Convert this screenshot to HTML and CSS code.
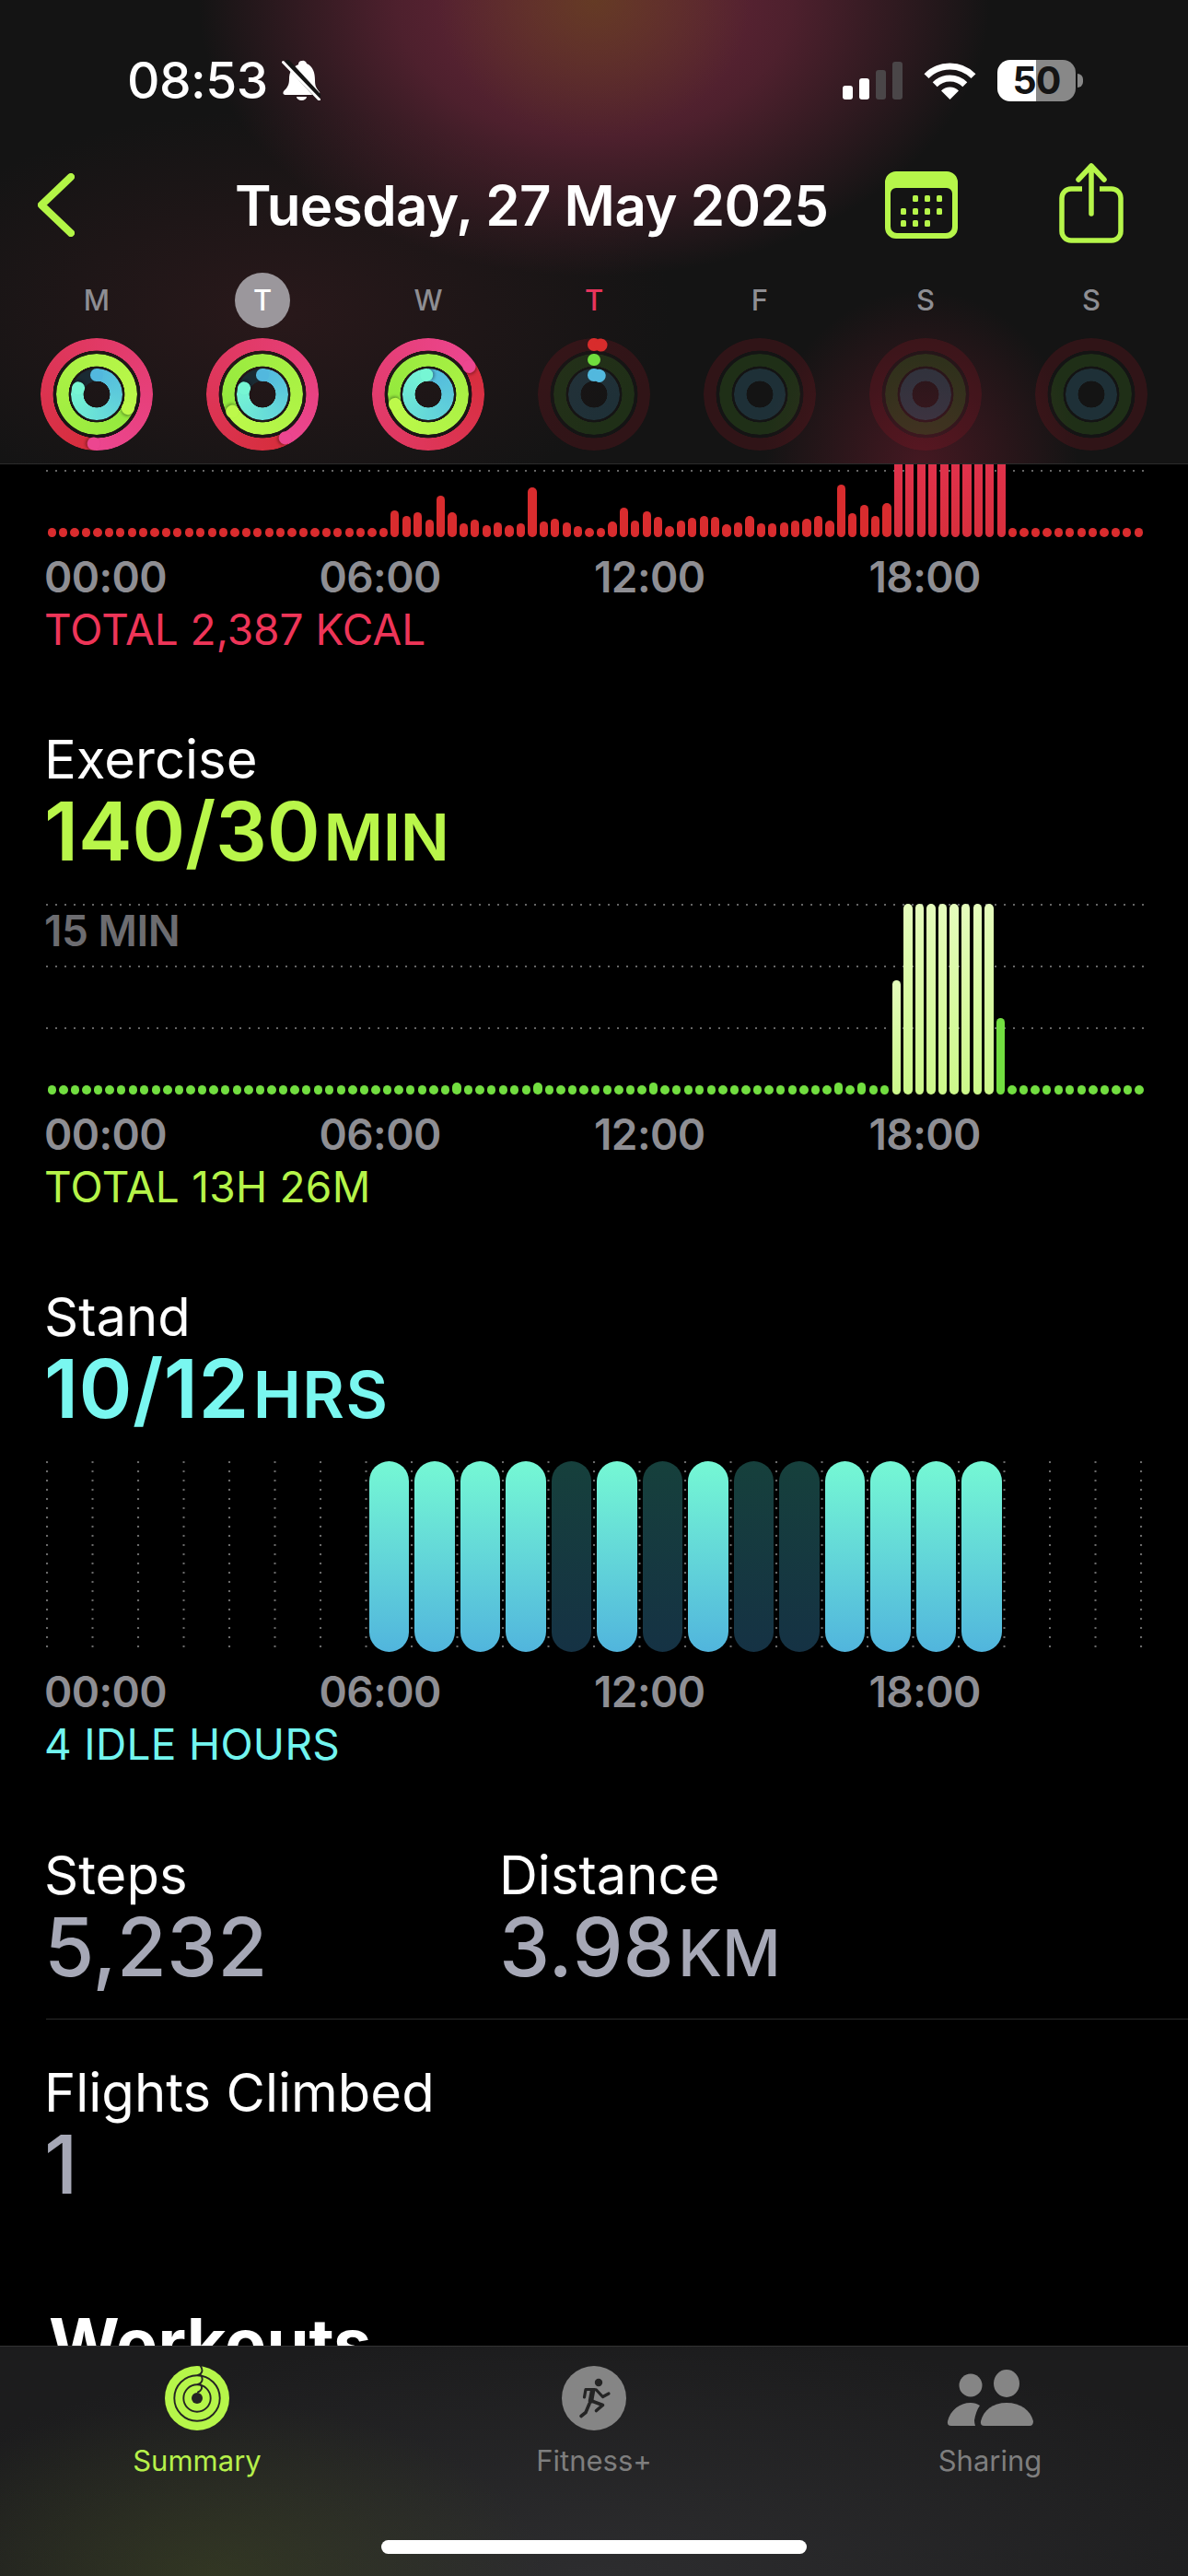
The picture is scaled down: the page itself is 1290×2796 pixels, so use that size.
FILE: index.html
```html
<!DOCTYPE html>
<html lang="en">
<head>
<meta charset="utf-8">
<title>Tuesday, 27 May 2025</title>
<link rel="stylesheet" href="styles.css">
</head>
<body>
<div class="app">
  <header class="top">
    <div class="status">
      <div class="status-left">
        <span class="clock">08:53</span>
        <svg class="bell" viewBox="0 0 42 44" width="42" height="44">
          <path fill="#fff" d="M22 1a4 4 0 0 1 5 3C34 7 36 14 36 22C36 28 37 30 41 35Q42 38 38 38L5 38Q0 38 2 34C6 30 8 27 8 21C8 13 11 8 18 5a4 4 0 0 1 4-4Z"/>
          <path fill="#fff" d="M16 40h11a5.500 4 0 0 1-11 0Z"/>
          <path stroke="#141414" stroke-width="7" d="M4 1L41 41"/>
          <path stroke="#fff" stroke-width="3" stroke-linecap="round" d="M1.500 2.500L40.500 43"/>
        </svg>
      </div>
      <div class="status-right">
        <div class="signal"><i class="s1"></i><i class="s2"></i><i class="s3"></i><i class="s4"></i></div>
        <svg class="wifi" viewBox="0 0 57 42" width="57" height="42">
          <path fill="none" stroke="#fff" stroke-width="7" d="M3 16.600A36 36 0 0 1 54 16.600"/>
          <path fill="none" stroke="#fff" stroke-width="7" d="M12.200 25.700A23 23 0 0 1 44.800 25.700"/>
          <path fill="#fff" d="M28.500 42L19 32.500A13.500 13.500 0 0 1 38 32.500Z"/>
        </svg>
        <div class="battery">50</div>
      </div>
    </div>
    <nav class="nav">
      <svg class="chevron" viewBox="0 0 40 69" width="40" height="69">
        <path fill="none" stroke="#b3f546" stroke-width="8" stroke-linecap="round" stroke-linejoin="round" d="M36 4L4 34.500L36 65"/>
      </svg>
      <h1 class="title">Tuesday, 27 May 2025</h1>
      <svg class="calendar" viewBox="0 0 79 73" width="79" height="73">
        <path fill="#b6f64a" fill-rule="evenodd" d="M12 0H67A12 12 0 0 1 79 12V61A12 12 0 0 1 67 73H12A12 12 0 0 1 0 61V12A12 12 0 0 1 12 0ZM12 18A6 6 0 0 0 6 24V60A7 7 0 0 0 13 67H66A7 7 0 0 0 73 60V24A6 6 0 0 0 67 18Z"/>
        <g fill="#b6f64a">
          <rect x="30" y="26" width="6" height="7" rx="1.500"/><rect x="43" y="26" width="6" height="7" rx="1.500"/><rect x="56" y="26" width="6" height="7" rx="1.500"/>
          <rect x="17" y="40" width="6" height="7" rx="1.500"/><rect x="30" y="40" width="6" height="7" rx="1.500"/><rect x="43" y="40" width="6" height="7" rx="1.500"/><rect x="56" y="40" width="6" height="7" rx="1.500"/>
          <rect x="17" y="53" width="6" height="7" rx="1.500"/><rect x="30" y="53" width="6" height="7" rx="1.500"/><rect x="43" y="53" width="6" height="7" rx="1.500"/>
        </g>
      </svg>
      <svg class="share" viewBox="0 0 70 87" width="70" height="87">
        <g fill="none" stroke="#b6f64a" stroke-width="5.500" stroke-linecap="round" stroke-linejoin="round">
          <path stroke-linecap="butt" d="M25 28H13A10 10 0 0 0 3 38V74A10 10 0 0 0 13 84H57A10 10 0 0 0 67 74V38A10 10 0 0 0 57 28H44"/>
          <path d="M35 55V3M21 18L35 3L49 18"/>
        </g>
      </svg>
    </nav>
    <div class="days">
      <div class="day">
        <span class="day-label">M</span>
        <div class="ring">
          <div class="arc move lap" style="--head:183deg"></div><i class="cap move" style="--a:183deg"></i>
          <div class="arc exercise lap" style="--head:113deg"></div><i class="cap exercise" style="--a:113deg"></i>
          <div class="arc stand part" style="--head:287deg"></div><i class="cap stand start" style="--a:0deg"></i><i class="cap stand" style="--a:287deg"></i>
        </div>
      </div>
      <div class="day">
        <span class="day-label today">T</span>
        <div class="ring">
          <div class="arc move lap" style="--head:152deg"></div><i class="cap move" style="--a:152deg"></i>
          <div class="arc exercise lap" style="--head:240deg"></div><i class="cap exercise" style="--a:240deg"></i>
          <div class="arc stand part" style="--head:287deg"></div><i class="cap stand start" style="--a:0deg"></i><i class="cap stand" style="--a:287deg"></i>
        </div>
      </div>
      <div class="day">
        <span class="day-label">W</span>
        <div class="ring">
          <div class="arc move lap" style="--head:56deg"></div><i class="cap move" style="--a:56deg"></i>
          <div class="arc exercise lap" style="--head:253deg"></div><i class="cap exercise" style="--a:253deg"></i>
          <div class="arc stand part" style="--head:355deg"></div><i class="cap stand" style="--a:355deg"></i>
        </div>
      </div>
      <div class="day">
        <span class="day-label current">T</span>
        <div class="ring low">
          <div class="arc move track"></div><i class="cap move start" style="--a:0deg"></i><i class="cap move start" style="--a:8deg"></i>
          <div class="arc exercise track"></div><i class="cap exercise start" style="--a:0deg"></i>
          <div class="arc stand track"></div><i class="cap stand start" style="--a:0deg"></i><i class="cap stand start" style="--a:16deg"></i>
        </div>
      </div>
      <div class="day">
        <span class="day-label">F</span>
        <div class="ring"><div class="arc move track"></div><div class="arc exercise track"></div><div class="arc stand track"></div></div>
      </div>
      <div class="day">
        <span class="day-label">S</span>
        <div class="ring"><div class="arc move track"></div><div class="arc exercise track"></div><div class="arc stand track"></div></div>
      </div>
      <div class="day">
        <span class="day-label">S</span>
        <div class="ring"><div class="arc move track"></div><div class="arc exercise track"></div><div class="arc stand track"></div></div>
      </div>
    </div>
  </header>

  <main class="content">
    <section class="metric">
      <div class="chart chart-move bars bars-red">
        <i></i><i></i><i></i><i></i><i></i><i></i><i></i><i></i><i></i><i></i><i></i><i></i><i></i><i></i><i></i><i></i><i></i><i></i><i></i><i></i><i></i><i></i><i></i><i></i><i></i><i></i><i></i><i></i><i></i><i></i>
        <i style="height:29px"></i><i style="height:23px"></i><i style="height:27px"></i><i style="height:19px"></i><i style="height:45px"></i><i style="height:27px"></i><i style="height:15px"></i><i style="height:19px"></i><i style="height:13px"></i><i style="height:16px"></i><i style="height:13px"></i><i style="height:15px"></i><i style="height:54px"></i><i style="height:17px"></i><i style="height:20px"></i><i style="height:16px"></i><i style="height:12px"></i><i style="height:10px"></i><i style="height:10px"></i><i style="height:17px"></i><i style="height:32px"></i><i style="height:18px"></i><i style="height:28px"></i><i style="height:22px"></i><i style="height:12px"></i><i style="height:18px"></i><i style="height:21px"></i><i style="height:23px"></i><i style="height:22px"></i><i style="height:14px"></i><i style="height:16px"></i><i style="height:23px"></i><i style="height:15px"></i><i style="height:15px"></i><i style="height:16px"></i><i style="height:18px"></i><i style="height:20px"></i><i style="height:23px"></i><i style="height:18px"></i><i style="height:57px"></i><i style="height:26px"></i><i style="height:35px"></i><i style="height:23px"></i><i style="height:37px"></i>
        <i class="hot"></i><i class="hot"></i><i class="hot"></i><i class="hot"></i><i class="hot"></i><i class="hot"></i><i class="hot"></i><i class="hot"></i><i class="hot"></i><i class="hot"></i>
        <i></i><i></i><i></i><i></i><i></i><i></i><i></i><i></i><i></i><i></i><i></i><i></i>
      </div>
      <div class="times"><span>00:00</span><span>06:00</span><span>12:00</span><span>18:00</span></div>
      <p class="total total-move">TOTAL 2,387 KCAL</p>
    </section>

    <section class="metric spaced">
      <h2 class="metric-name">Exercise</h2>
      <p class="metric-value value-exercise">140/30<span class="unit">MIN</span></p>
      <div class="chart chart-exercise bars bars-green">
        <span class="scale-label">15 MIN</span>
        <i></i><i></i><i></i><i></i><i></i><i></i><i></i><i></i><i></i><i></i><i></i><i></i><i></i><i></i><i></i><i></i><i></i><i></i><i></i><i></i><i></i><i></i><i></i><i></i><i></i><i></i><i></i><i></i><i></i><i></i><i></i><i></i><i></i><i></i><i></i>
        <i class="bump"></i><i></i><i></i><i></i><i></i><i></i><i></i>
        <i class="bump"></i><i></i><i></i><i></i><i></i><i></i><i></i><i></i><i></i><i></i>
        <i class="bump"></i><i></i><i></i><i></i><i></i><i></i><i></i><i></i><i></i><i></i><i></i><i></i><i></i><i></i><i></i><i></i>
        <i class="bump"></i><i></i><i class="bump"></i><i></i><i></i>
        <i class="lit" style="height:124px"></i><i class="lit"></i><i class="lit"></i><i class="lit"></i><i class="lit"></i><i class="lit"></i><i class="lit"></i><i class="lit"></i><i class="lit"></i>
        <i style="height:83px"></i>
        <i></i><i></i><i></i><i></i><i></i><i></i><i></i><i></i><i></i><i></i><i></i><i></i>
      </div>
      <div class="times"><span>00:00</span><span>06:00</span><span>12:00</span><span>18:00</span></div>
      <p class="total total-exercise">TOTAL 13H 26M</p>
    </section>

    <section class="metric spaced">
      <h2 class="metric-name">Stand</h2>
      <p class="metric-value value-stand">10/12<span class="unit">HRS</span></p>
      <div class="chart chart-stand">
        <i class="hour"></i><i class="hour"></i><i class="hour"></i><i class="hour"></i><i class="hour idle"></i><i class="hour"></i><i class="hour idle"></i><i class="hour"></i><i class="hour idle"></i><i class="hour idle"></i><i class="hour"></i><i class="hour"></i><i class="hour"></i><i class="hour"></i>
      </div>
      <div class="times"><span>00:00</span><span>06:00</span><span>12:00</span><span>18:00</span></div>
      <p class="total total-stand">4 IDLE HOURS</p>
    </section>

    <section class="stats">
      <div class="stat-row">
        <div class="stat stat-steps">
          <h2 class="metric-name">Steps</h2>
          <p class="metric-value value-plain">5,232</p>
        </div>
        <div class="stat">
          <h2 class="metric-name">Distance</h2>
          <p class="metric-value value-plain">3.98<span class="unit">KM</span></p>
        </div>
      </div>
      <div class="stat-rule"></div>
      <div class="stat">
        <h2 class="metric-name">Flights Climbed</h2>
        <p class="metric-value value-plain">1</p>
      </div>
    </section>

    <h2 class="workouts">Workouts</h2>
  </main>

  <footer class="tabbar">
    <div class="tabs">
      <div class="tab tab-active">
        <svg class="tab-icon" viewBox="-35 -35 70 70" width="70" height="70">
          <circle r="35" fill="#b6f64a"/>
          <g fill="none" stroke="#242424" stroke-width="1.900">
            <circle r="24.700"/><circle r="14.700"/>
            <path stroke-linecap="round" d="M4 -34.500C7 -30 5 -26 1 -25M4.500 -24.500C7 -20 5 -16 1 -15M4 -14.500C6.500 -11 4 -7.500 1 -6.500"/>
          </g>
          <circle r="6" fill="#242424"/>
        </svg>
        <span class="tab-label">Summary</span>
      </div>
      <div class="tab">
        <svg class="tab-icon" viewBox="0 0 70 70" width="70" height="70">
          <circle cx="35" cy="35" r="35" fill="#858585"/>
          <circle cx="40" cy="18" r="4.200" fill="#242424"/>
          <g fill="none" stroke="#242424" stroke-linecap="round" stroke-linejoin="round">
            <path stroke-width="5.500" d="M33.500 27L31.500 38"/>
            <path stroke-width="3.200" d="M36 25.500H26L24.500 34M37.500 26L44.500 33.500L51 30"/>
            <path stroke-width="3.600" d="M32.500 38L44.500 42.500L37.500 48.500M30 41L26 50.500L21 54.500"/>
          </g>
        </svg>
        <span class="tab-label">Fitness+</span>
      </div>
      <div class="tab">
        <svg class="tab-icon" viewBox="0 0 95 70" width="95" height="70">
          <g fill="#858585">
            <circle cx="26" cy="21" r="12.500"/>
            <ellipse cx="65" cy="19" rx="14" ry="15"/>
            <path d="M41 65Q36 65 37 60C40 48 50 40 65 40C80 40 91 48 94 60Q94 65 90 65Z"/>
            <path d="M1 60C4 48 14 40 26 40C30 40 33 41 36 43C33 47 31 53 30 59Q30 62 31 65H5Q0 65 1 60Z"/>
          </g>
        </svg>
        <span class="tab-label">Sharing</span>
      </div>
    </div>
    <div class="home-indicator"></div>
  </footer>
</div>
</body>
</html>
```

FILE: styles.css
```css
* { box-sizing: border-box; margin: 0; padding: 0; }

html, body { background: #000; }

body {
  width: 1290px;
  height: 2796px;
  overflow: hidden;
  font-family: Inter, "Liberation Sans", sans-serif;
  color: #fff;
}

.app {
  display: flex;
  flex-direction: column;
  height: 2796px;
}

/* ---------- header ---------- */
.top {
  flex: none;
  height: 504px;
  padding-top: 64px;
  border-bottom: 1px solid #2c2c2c;
  background-color: #141414;
  background-image:
    radial-gradient(ellipse 170px 150px at 645px 0, rgba(95, 72, 22, .6), rgba(95, 72, 22, 0)),
    radial-gradient(ellipse 430px 300px at 645px 0, rgba(125, 42, 66, .85) 0, rgba(125, 42, 66, .55) 50%, rgba(125, 42, 66, 0) 100%),
    radial-gradient(ellipse 430px 220px at 300px 340px, rgba(70, 30, 35, .42), rgba(70, 30, 35, 0)),
    radial-gradient(ellipse 170px 190px at 1000px 505px, rgba(135, 30, 52, .42), rgba(135, 30, 52, 0));
}

.status {
  display: flex;
  justify-content: space-between;
  align-items: center;
  height: 46px;
  padding: 0 122px 0 138px;
}

.status-left { display: flex; align-items: center; gap: 15px; }

.clock {
  font-size: 55px;
  font-weight: 500;
  line-height: 46px;
  letter-spacing: -.5px;
}

.bell { display: block; }

.status-right { display: flex; align-items: center; }

.signal {
  display: flex;
  align-items: flex-end;
  gap: 7px;
  height: 41px;
}

.signal i { display: block; width: 11px; border-radius: 3px; background: #4a4648; }
.signal .s1 { height: 15px; background: #fff; }
.signal .s2 { height: 23px; background: #fff; }
.signal .s3 { height: 32px; }
.signal .s4 { height: 41px; }

.wifi { display: block; margin-left: 23px; }

.battery {
  position: relative;
  width: 85px;
  height: 45px;
  margin-left: 23px;
  border-radius: 14px;
  background: linear-gradient(90deg, #fff 50%, #888 50%);
  color: #141414;
  font-size: 41px;
  font-weight: 700;
  line-height: 45px;
  letter-spacing: -1px;
  text-align: center;
}

.battery::after {
  content: "";
  position: absolute;
  left: 87px;
  top: 15px;
  width: 6px;
  height: 15px;
  border-radius: 0 6px 6px 0;
  background: #888;
}

.nav {
  display: flex;
  align-items: center;
  height: 87px;
  margin-top: 67px;
  padding: 0 70px 0 41px;
}

.chevron { display: block; flex: none; margin-top: 4px; }

.title {
  margin-left: 174px;
  padding-top: 5px;
  font-size: 60px;
  font-weight: 600;
  line-height: 82px;
  letter-spacing: -.55px;
  white-space: nowrap;
}

.calendar { display: block; flex: none; margin-left: auto; margin-top: 4px; }
.share { display: block; flex: none; margin-left: 110px; }

.days {
  display: grid;
  grid-template-columns: repeat(7, 180px);
  margin-top: 32px;
  padding: 0 15px;
}

.day { display: flex; flex-direction: column; align-items: center; }

.day-label {
  width: 60px;
  height: 60px;
  border-radius: 50%;
  color: #8e8e93;
  font-size: 31px;
  font-weight: 500;
  line-height: 60px;
  text-align: center;
}

.day-label.today { background: #9b979c; color: #fff; }
.day-label.current { color: #e8345c; }

/* ---------- rings ---------- */
.ring {
  position: relative;
  width: 122px;
  height: 122px;
  margin-top: 11px;
}

.move {
  --r: 54px;
  --from: #d62d3b;
  --to: #ec4690;
  --track: rgba(220, 20, 40, .14);
}

.exercise {
  --r: 37.5px;
  --from: #93e83d;
  --to: #bdf94a;
  --track: rgba(110, 230, 50, .13);
}

.stand {
  --r: 21px;
  --from: #52b8de;
  --to: #76f6d4;
  --track: rgba(85, 200, 240, .16);
}

.low .move { --from: #d82c2c; }
.low .exercise { --from: #70dd3e; }
.low .stand { --from: #52b8de; }

.arc {
  position: absolute;
  inset: calc(61px - var(--r) - 6.75px);
  border-radius: 50%;
  -webkit-mask: radial-gradient(closest-side, transparent calc(100% - 13.8px), #000 calc(100% - 13.3px));
  mask: radial-gradient(closest-side, transparent calc(100% - 13.8px), #000 calc(100% - 13.3px));
}

.arc.track { background: var(--track); }
.arc.lap { background: conic-gradient(from var(--head), var(--from), var(--to)); }
.arc.part {
  background: conic-gradient(var(--from) 0deg, var(--to) var(--head), #1a2a33 var(--head));
}

.cap {
  position: absolute;
  left: calc(50% - 6.75px);
  top: calc(50% - var(--r) - 6.75px);
  width: 13.5px;
  height: 13.5px;
  border-radius: 50%;
  background: var(--to);
  box-shadow: 2px 0 3px rgba(0, 0, 0, .3);
  transform-origin: 50% calc(var(--r) + 6.75px);
  transform: rotate(var(--a));
}

.cap.start { background: var(--from); box-shadow: none; }

/* ---------- scrolling content ---------- */
.content {
  flex: 1 1 0;
  min-height: 0;
  overflow: hidden;
  background: #000;
}

.metric, .stats { padding-left: 48px; }
.metric.spaced { margin-top: 87px; }

.metric-name {
  margin: -5px 0 5px;
  font-size: 58px;
  font-weight: 400;
  line-height: 62px;
}

.metric-value {
  font-size: 88px;
  font-weight: 600;
  line-height: 84px;
  white-space: nowrap;
}

.unit { margin-left: 4px; font-size: 70px; font-weight: 600; line-height: 0; }

.value-exercise { color: #b9f64a; letter-spacing: -.3px; }
.value-stand { color: #79f7f0; letter-spacing: .4px; }
.value-stand .unit { letter-spacing: 1.5px; }
.value-plain { color: #a6a8b6; font-weight: 500; }
.value-plain .unit { font-weight: 500; }

.chart {
  position: relative;
  width: 1193px;
  height: 207px;
  margin: 37px 0 0 2px;
  background-image:
    linear-gradient(90deg, #666 2px, transparent 2px),
    linear-gradient(90deg, #666 2px, transparent 2px),
    linear-gradient(90deg, #666 2px, transparent 2px);
  background-repeat: repeat-x;
  background-size: 10px 2px;
  background-position: 0 0, 0 67px, 0 134px;
}

.chart-move {
  height: 79px;
  margin-top: 0;
  overflow: hidden;
  background-position: 0 -128px, 0 -61px, 0 6px;
}

.bars { display: flex; align-items: flex-end; }

.bars i {
  display: block;
  flex: 1 1 0;
  height: 10px;
  margin: 0 1.6px;
  border-radius: 5px;
}

.bars-red i { background: #d92c2e; }
.bars-red .hot {
  height: 100px;
  background: linear-gradient(#e2324f, #d82f3c);
}

.bars-green i { background: #72de40; }
.bars-green .bump { height: 13.5px; }
.bars-green .lit {
  height: 207px;
  background: linear-gradient(#e5fcbc, #ccf88a);
}

.scale-label {
  position: absolute;
  left: -2px;
  top: 1px;
  color: #6c6c70;
  font-size: 46px;
  font-weight: 600;
  line-height: 56px;
  letter-spacing: -.5px;
}

.chart-stand {
  display: flex;
  padding-left: 347.5px;
  background: none;
}

.chart-stand::before {
  content: "";
  position: absolute;
  left: 0;
  top: 0;
  width: 1193px;
  height: 203px;
  background-image: radial-gradient(circle at 1px 5px, #6a6a6a 1px, transparent 1.6px);
  background-size: 49.5px 10px;
  background-position: 0 -4px;
}

.hour {
  position: relative;
  display: block;
  flex: none;
  width: 43.5px;
  height: 207px;
  margin: 0 3px;
  border-radius: 22px;
  background: linear-gradient(#75f8d4, #51b5dd);
}

.hour.idle { background: linear-gradient(#16403c, #153244); }

.times {
  display: grid;
  grid-template-columns: repeat(4, 298.5px);
  margin-top: 15px;
  color: #8e8e93;
  font-size: 46px;
  font-weight: 600;
  line-height: 56px;
  letter-spacing: -.6px;
}

.total {
  margin-top: 1px;
  font-size: 46px;
  font-weight: 400;
  line-height: 56px;
}

.total-move { color: #ee3558; }
.total-exercise { color: #b5f449; letter-spacing: .27px; }
.total-stand { color: #72f5ef; letter-spacing: .3px; }

.stats { margin-top: 88px; }

.stat-row { display: flex; }
.stat-steps { width: 494px; }

.stat-rule {
  height: 1px;
  margin: 36px 0 53px 2px;
  background: #2a2a2a;
}

.workouts {
  margin-top: 112px;
  padding-left: 53px;
  font-size: 74px;
  font-weight: 700;
  line-height: 80px;
}

/* ---------- tab bar ---------- */
.tabbar {
  flex: none;
  height: 250px;
  padding-top: 21px;
  border-top: 1px solid #333;
  background-color: #1c1c1d;
  background-image:
    radial-gradient(ellipse 360px 190px at 230px 100%, rgba(75, 88, 30, .35), rgba(75, 88, 30, 0)),
    radial-gradient(ellipse 820px 260px at 645px 100%, #2d2d2f, rgba(45, 45, 47, 0));
}

.tabs { display: grid; grid-template-columns: repeat(3, 430px); }

.tab { display: flex; flex-direction: column; align-items: center; }

.tab-active { padding-right: 2px; }

.tab-icon { display: block; }

.tab-label {
  margin-top: 15px;
  color: #7e7e7e;
  font-size: 31px;
  line-height: 36px;
}

.tab-active .tab-label { color: #b6f04a; }

.home-indicator {
  width: 462px;
  height: 15px;
  margin: 68px auto 0;
  border-radius: 8px;
  background: #fff;
}
```
